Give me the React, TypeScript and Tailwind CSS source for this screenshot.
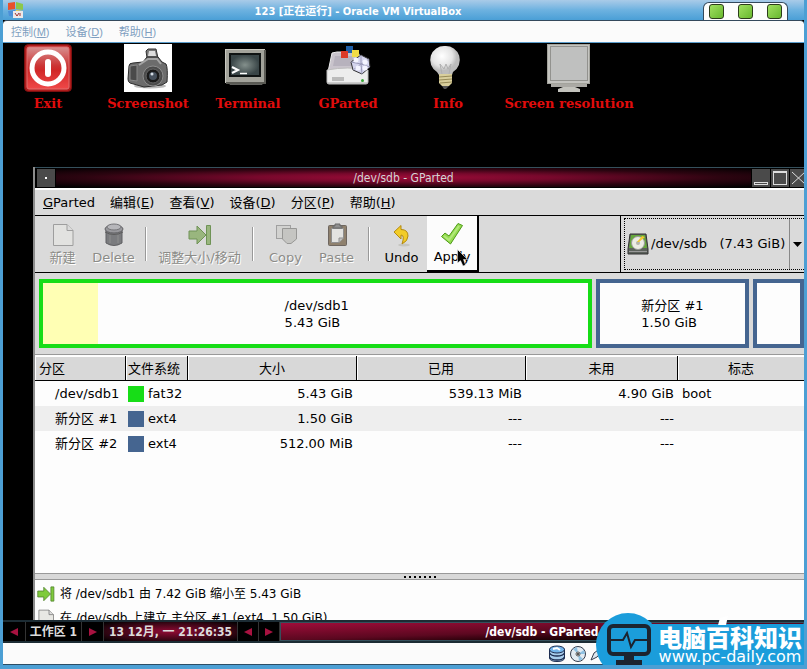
import { useState } from "react";
import type { ReactNode } from "react";

interface Partition {
  name: string;
  fs: string;
  color: string;
  size: string;
  used: string;
  unused: string;
  flags: string;
}

const partitions: Partition[] = [
  { name: "/dev/sdb1", fs: "fat32", color: "bg-[#17dd17]", size: "5.43 GiB", used: "539.13 MiB", unused: "4.90 GiB", flags: "boot" },
  { name: "新分区 #1", fs: "ext4", color: "bg-[#456590]", size: "1.50 GiB", used: "---", unused: "---", flags: "" },
  { name: "新分区 #2", fs: "ext4", color: "bg-[#456590]", size: "512.00 MiB", used: "---", unused: "---", flags: "" },
];

/* ---------- desktop icons ---------- */

function ExitIcon() {
  return (
    <svg width="48" height="48" viewBox="0 0 48 48">
      <defs>
        <linearGradient id="exit" x1="0" y1="0" x2="0" y2="1">
          <stop offset="0" stopColor="#d89090" />
          <stop offset="0.45" stopColor="#cc3434" />
          <stop offset="0.55" stopColor="#d02828" />
          <stop offset="1" stopColor="#f04848" />
        </linearGradient>
      </defs>
      <rect x="0.5" y="0.5" width="47" height="47" rx="4" fill="#b01c1c" stroke="#7c1010" />
      <rect x="3" y="3" width="42" height="42" rx="2" fill="url(#exit)" stroke="#e07070" />
      <circle cx="24" cy="24" r="16" fill="none" stroke="#fff" strokeWidth="5" />
      <rect x="21" y="15" width="6" height="18" rx="3" fill="#fff" />
    </svg>
  );
}

function CameraIcon() {
  return (
    <svg width="48" height="48" viewBox="0 0 48 48">
      <rect width="48" height="48" fill="#fff" />
      <ellipse cx="26" cy="42" rx="16" ry="2.500" fill="#bbb" />
      <path d="M23 14 22 7 24 5H32L34 14Z" fill="#777" stroke="#333" />
      <path d="M25 7H31L32 12H24Z" fill="#ddd" />
      <path d="M5 22Q5 19 9 19L19 18 23 13H34L38 18 42 20Q44 24 43 38L38 41 20 43 6 39Q4 38 4 35Z" fill="#6c6c6c" stroke="#2c2c2c" />
      <path d="M6 22 13 21V37L6 36Z" fill="#4a4a4a" stroke="#888" />
      <path d="M15 21 24 15H33L37 20" fill="none" stroke="#a5a5a5" strokeWidth="2" />
      <circle cx="29" cy="32" r="10" fill="#4b4b4b" stroke="#8c8c8c" strokeWidth="1" />
      <circle cx="29" cy="32" r="7" fill="#1b1b1b" stroke="#666" />
      <circle cx="29" cy="32" r="4" fill="#46505c" />
      <circle cx="28" cy="30" r="1.500" fill="#d4dce4" />
    </svg>
  );
}

function TerminalIcon() {
  return (
    <svg width="48" height="48" viewBox="0 0 48 48">
      <defs>
        <radialGradient id="crt">
          <stop offset="0" stopColor="#84908c" />
          <stop offset="1" stopColor="#3a4648" />
        </radialGradient>
      </defs>
      <path d="M4 38H40L38 41H6Z" fill="#63635f" />
      <rect x="1.500" y="5.500" width="39" height="33" fill="#a3a39b" stroke="#c8c8c0" />
      <path d="M41 6V39H2" fill="none" stroke="#5a5a54" strokeWidth="2" />
      <rect x="5" y="9" width="32" height="24" fill="#101414" />
      <rect x="7" y="11" width="28" height="20" fill="url(#crt)" />
      <path d="M8 23 14 26 8 29" fill="none" stroke="#fff" strokeWidth="2" />
      <path d="M16 29.500H23" stroke="#fff" strokeWidth="1.500" />
    </svg>
  );
}

function GPartedIcon() {
  return (
    <svg width="48" height="48" viewBox="0 0 48 48">
      <path d="M8 9 13 8H34L42 28H4Z" fill="#c9c4cc" stroke="#eee" />
      <path d="M11 12H28L31 22H9Z" fill="#b7b2bd" />
      <path d="M3 26Q24 22 44 26V38Q44 40 42 40H5Q3 40 3 38Z" fill="#ededed" stroke="#bdbdbd" />
      <path d="M8 33H20V37H8Z" fill="#bbb" />
      <path d="M4 39H43" stroke="#aaa" />
      <circle cx="38.500" cy="36.500" r="1.500" fill="#35a635" />
      <rect x="22" y="2" width="7" height="7" fill="#1e5fa8" />
      <rect x="17" y="7" width="7" height="7" fill="#dc3a28" />
      <rect x="28" y="6" width="7" height="7" fill="#f2dc46" />
      <path d="M37 11 45 15 46 23 38 30 29 26 27 18Z" fill="#d4d4ee" stroke="#333" />
      <path d="M37 11V20L45 15M37 20 27 18M37 20 38 30M37 20 46 23M37 20 29 26" fill="none" stroke="#9a9ab8" />
      <circle cx="32" cy="16" r="2.500" fill="#f4f4ff" />
      <circle cx="41" cy="18" r="2.500" fill="#f4f4ff" />
      <circle cx="34" cy="24" r="2.500" fill="#f4f4ff" />
      <circle cx="41" cy="24" r="2.500" fill="#f4f4ff" />
    </svg>
  );
}

function BulbIcon() {
  return (
    <svg width="48" height="48" viewBox="0 0 48 48">
      <defs>
        <radialGradient id="bulb" cx="0.4" cy="0.35">
          <stop offset="0" stopColor="#fff" />
          <stop offset="0.7" stopColor="#e4e4e4" />
          <stop offset="1" stopColor="#bcbcbc" />
        </radialGradient>
      </defs>
      <path d="M21 2A14 14 0 0 1 29 28L28 31H15L13 28A14 14 0 0 1 21 2Z" fill="url(#bulb)" />
      <path d="M18 30 16 20 20 25 22 20 24 25 27 20 25 30" fill="none" stroke="#b0b0b0" />
      <path d="M15 30H28V39L25 42H18L15 39Z" fill="#d9cf9c" />
      <path d="M15 33 28 32M15 36 28 35M16 39 28 38" stroke="#978b58" />
      <path d="M18 42H25L22 45H20Z" fill="#555" />
    </svg>
  );
}

function MonitorIcon() {
  return (
    <svg width="48" height="48" viewBox="0 0 48 48">
      <rect x="2.500" y="0.500" width="42" height="39" fill="#c4c4c0" stroke="#a3a39c" />
      <rect x="5.500" y="2.500" width="37" height="34" fill="#bfc0bf" stroke="#92928e" />
      <path d="M6 40H42V43H6Z" fill="#aaa9a4" />
      <path d="M18 43H30L35 45V48H13V45Z" fill="#c3c3bd" />
    </svg>
  );
}

/* ---------- toolbar icons ---------- */

function NewIcon({ className = "" }: { className?: string }) {
  return (
    <svg width="24" height="24" viewBox="0 0 24 24" className={className}>
      <path d="M2.500 1.500H16L22 7.500V22.500H2.500Z" fill="#e8e8e4" stroke="#777" />
      <path d="M16 1.500V7.500H22" fill="#ddd" stroke="#777" />
    </svg>
  );
}

function TrashIcon() {
  return (
    <svg width="24" height="24" viewBox="0 0 24 24" className="opacity-75">
      <path d="M4 5H20V20Q12 25 4 20Z" fill="#5b5c60" stroke="#36373a" />
      <path d="M8 12V20M16 12V20" stroke="#777" />
      <ellipse cx="12" cy="6" rx="9" ry="4" fill="#828288" stroke="#3c3c40" />
      <ellipse cx="12" cy="4" rx="7" ry="3" fill="#aaaab0" stroke="#55555a" />
      <path d="M3 9Q12 14 21 9" fill="none" stroke="#333" />
    </svg>
  );
}

function ResizeIcon({ small = false }: { small?: boolean }) {
  return (
    <svg width={small ? 18 : 24} height={small ? 18 : 24} viewBox="0 0 24 24" className={small ? "" : "opacity-75"}>
      <path d="M1 8H9V3L18 12 9 21V16H1Z" fill={small ? "#7fcb3c" : "#84aa60"} stroke="#4c7c2a" />
      <path d="M18.500 2.500H22.500V21.500H18.500Z" fill={small ? "#7fcb3c" : "#84aa60"} stroke="#4c7c2a" />
    </svg>
  );
}

function CopyIcon() {
  return (
    <svg width="24" height="24" viewBox="0 0 24 24" className="opacity-70">
      <rect x="2.500" y="2.500" width="14" height="13" fill="#d0d0cc" stroke="#888" />
      <path d="M8.500 5.500H22.500V16L17 20.500H13L8.500 16Z" fill="#bdbdb9" stroke="#7c7c78" />
    </svg>
  );
}

function PasteIcon() {
  return (
    <svg width="24" height="24" viewBox="0 0 24 24" className="opacity-75">
      <rect x="3.500" y="2.500" width="18" height="20" rx="1" fill="#77644b" stroke="#4a4036" />
      <path d="M6.500 5.500H18.500V15L14 19.500H6.500Z" fill="#e6e6e4" stroke="#777" />
      <path d="M14 19V15H18" fill="#bbb" stroke="#777" />
      <path d="M8 5V3H10V1H15V3H17V5Z" fill="#777" stroke="#444" />
    </svg>
  );
}

function UndoIcon() {
  return (
    <svg width="24" height="24" viewBox="0 0 24 24">
      <ellipse cx="14" cy="22" rx="6" ry="1.500" fill="#c5c5c0" />
      <path d="M4 9 11 2.500V6.500Q18 6.500 18 13 18 18 12 21 15 12 11 12V16Z" fill="#f2cc28" stroke="#b48a10" />
    </svg>
  );
}

function ApplyIcon() {
  return (
    <svg width="24" height="24" viewBox="0 0 24 24">
      <path d="M1.500 14.500 5 11 9 14 18 1.500 22.500 3.500 10.500 22Z" fill="#95dc50" stroke="#4e9a18" />
      <path d="M4 14 9 18 19 4" fill="none" stroke="#b2e87a" strokeWidth="2" />
    </svg>
  );
}

function DiskIcon() {
  return (
    <svg width="22" height="22" viewBox="0 0 22 22">
      <path d="M3 1H19L21 16V21H1V16Z" fill="#5c625c" stroke="#333" />
      <path d="M4 2H18L20 15H2Z" fill="#66a83c" />
      <circle cx="11" cy="10" r="6.500" fill="#ecece4" stroke="#999" />
      <circle cx="11" cy="10" r="2" fill="#b5b5ad" />
      <path d="M10 9 15 3 18 4 12 9Z" fill="#f1c832" />
      <path d="M2 18.500H20" stroke="#999" />
    </svg>
  );
}

function StackIcon() {
  return (
    <svg width="18" height="18" viewBox="0 0 18 18">
      <path d="M1.500 4V13Q2 16.500 9 16.500T16.500 13V4Z" fill="#a8cdec" stroke="#1d2d50" />
      <path d="M1.500 8Q3 11 9 11T16.500 8M1.500 12Q3 15 9 15T16.500 12" fill="none" stroke="#1d2d50" strokeWidth="1.500" />
      <ellipse cx="9" cy="4.500" rx="7.500" ry="3.500" fill="#74b6ec" stroke="#1d2d50" />
      <path d="M5 4 9 3 12 5" fill="none" stroke="#fff" strokeWidth="2" />
    </svg>
  );
}

function DiscIcon() {
  return (
    <svg width="18" height="18" viewBox="0 0 18 18">
      <circle cx="9" cy="9" r="7.500" fill="#e3ebf2" stroke="#333c4c" />
      <path d="M9 9 4 4 8 2ZM9 9 14 14 10 16ZM9 9 15 5 16 9Z" fill="#8fc1e2" />
      <circle cx="9" cy="9" r="2" fill="#fff" stroke="#555" />
      <circle cx="9" cy="9" r="1" fill="#222" />
    </svg>
  );
}

function Arrow({ left = false }: { left?: boolean }) {
  return (
    <svg width="8" height="8" viewBox="0 0 8 8" fill="#a81240">
      {left ? <path d="M8 0V8L0 4Z" /> : <path d="M0 0 8 4 0 8Z" />}
    </svg>
  );
}

/* ---------- host window ---------- */

function HostTitleBar() {
  return (
    <header className="flex h-5 items-end bg-linear-to-b from-[#a9cbe8] via-[#6db2e0] to-[#4a9fd6] pr-4 pl-1">
      <svg width="18" height="18" viewBox="0 0 18 18" className="self-center">
        <path d="M1 2 8 1V8L1 9Z" fill="#e8512c" />
        <path d="M9 1 16 3V9L9 8Z" fill="#8cc84b" />
        <path d="M1 10 8 9V16L2 15Z" fill="#4b8fd8" />
        <path d="M9 9 16 10 15 16 9 15Z" fill="#f6cf3a" />
        <path d="M6 10H16V17H6Z" fill="#ece8e8" />
        <path d="M8 12 10 15 12 12M13 12V15" stroke="#a03030" fill="none" />
      </svg>
      <h1 className="flex-1 self-center pr-3 pt-1 text-center font-['DejaVu_Sans_Condensed','DejaVu_Sans','Noto_Sans_CJK_SC',sans-serif] text-[11px] leading-4 font-bold text-white">
        123 [正在运行] - Oracle VM VirtualBox
      </h1>
      <div className="flex h-[18px] items-center justify-between gap-3.5 rounded-t-md border border-b-0 border-[#34495c] bg-[#fdfdfd] px-[5px]">
        {["最小化", "最大化", "关闭"].map((label) => (
          <button
            key={label}
            aria-label={label}
            className="size-[15px] rounded-[3px] border border-[#2c3c1c] bg-linear-to-br from-[#a0e060] to-[#68b82c]"
          />
        ))}
      </div>
    </header>
  );
}

function HostMenu() {
  const items = [["控制", "M"], ["设备", "D"], ["帮助", "H"]];
  return (
    <nav className="flex h-[23px] items-center gap-4 rounded-t-sm border-t border-b border-t-[#34495c] border-b-[#5b9dcb] bg-[#fbfbfb] pl-2 font-['Liberation_Sans','Noto_Sans_CJK_SC',sans-serif] text-[11px] leading-4 text-[#7f9fc0]">
      {items.map(([label, key]) => (
        <button key={key}>
          {label}(<u>{key}</u>)
        </button>
      ))}
    </nav>
  );
}

function Launcher({ label, icon, wide = false }: { label: string; icon: ReactNode; wide?: boolean }) {
  return (
    <button className={`flex flex-col items-center gap-1 ${wide ? "w-[126px]" : "w-[84px]"}`}>
      {icon}
      <span className="font-['DejaVu_Serif',serif] text-[13px] leading-4 font-bold whitespace-nowrap text-[#e00c0c]">
        {label}
      </span>
    </button>
  );
}

/* ---------- GParted ---------- */

function TitleBar() {
  return (
    <div className="flex h-[21px] items-center gap-px border-t border-b border-t-[#35505c] border-b-black bg-black pl-0.5">
      <button aria-label="menu" className="flex size-[18px] items-center justify-center bg-[#4a4a4a]">
        <span className="size-0.5 bg-white" />
      </button>
      <h2 className="flex h-full flex-1 items-center justify-center bg-[radial-gradient(ellipse_at_center,#9c0c38_0%,#78082c_30%,#2c0410_65%,#000_100%)] font-['DejaVu_Sans_Condensed','DejaVu_Sans',sans-serif] text-xs leading-4 text-[#d4d4d4]">
        /dev/sdb - GParted
      </h2>
      <button aria-label="minimize" className="flex h-[18px] w-[18px] items-end justify-center bg-[#4a4a4a] pb-0.5">
        <span className="h-[3px] w-3.5 border border-[#ddd]" />
      </button>
      <button aria-label="maximize" className="flex h-[18px] w-[18px] items-center justify-center bg-[#4a4a4a]">
        <span className="size-3.5 border border-t-2 border-[#ddd]" />
      </button>
      <button aria-label="close" className="h-[18px] w-3.5 overflow-hidden bg-[#4a4a4a]">
        <svg width="18" height="18" viewBox="0 0 18 18" stroke="#ddd">
          <path d="M2 3 15 15M15 3 2 15" />
        </svg>
      </button>
    </div>
  );
}

function MenuBar() {
  const items = [["编辑", "E"], ["查看", "V"], ["设备", "D"], ["分区", "P"], ["帮助", "H"]];
  return (
    <nav className="flex h-[27px] items-center gap-[15px] border-t-2 border-t-white bg-[#dadada] pl-2">
      <button><u>G</u>Parted</button>
      {items.map(([label, key]) => (
        <button key={key}>
          {label}(<u>{key}</u>)
        </button>
      ))}
    </nav>
  );
}

function ToolButton({ label, icon, width = "w-[51px]", disabled = false }: any) {
  return (
    <button
      disabled={disabled}
      className={`flex h-[54px] flex-col items-center gap-0.5 pt-1.5 whitespace-nowrap text-black disabled:text-[#8c8c88] disabled:[text-shadow:1px_1px_0_#fff] ${width}`}
    >
      {icon}
      {label}
    </button>
  );
}

function Separator() {
  return (
    <div className="flex w-3.5 justify-center">
      <span className="h-[34px] w-0.5 border-r border-l border-r-white border-l-[#999]" />
    </div>
  );
}

function Toolbar() {
  const [device, setDevice] = useState("sdb");

  return (
    <div className="flex h-[58px] items-center border-t border-b border-black bg-[#dadada] pl-0.5">
      <ToolButton label="新建" icon={<NewIcon className="opacity-60" />} disabled />
      <ToolButton label="Delete" icon={<TrashIcon />} disabled />
      <Separator />
      <ToolButton label="调整大小/移动" icon={<ResizeIcon />} width="w-[93px]" disabled />
      <Separator />
      <ToolButton label="Copy" icon={<CopyIcon />} disabled />
      <ToolButton label="Paste" icon={<PasteIcon />} disabled />
      <Separator />
      <ToolButton label="Undo" icon={<UndoIcon />} />
      <div className="relative border-r-2 border-b-2 border-black bg-[#fcfcfc]">
        <ToolButton label="Apply" icon={<ApplyIcon />} width="w-[50px]" />
        <svg width="12" height="18" viewBox="0 0 12 18" className="absolute top-[33px] left-[30px]">
          <path d="M0.500 0.500V14L3.500 11.500 6 17 8.500 16 6.500 10.500H10.500Z" fill="#000" stroke="#fff" strokeWidth="0.500" />
        </svg>
      </div>
      <div className="ml-auto flex h-full items-center border-l border-black pl-[3px]">
        <label className="flex h-[52px] items-center border border-r-0 border-dotted border-black pl-0.5">
          <DiskIcon />
          <select
            aria-label="device"
            value={device}
            onChange={(e) => setDevice(e.target.value)}
            className="w-[140px] appearance-none bg-transparent pl-0.5 outline-none"
          >
            <option value="sdb">{"/dev/sdb\u00a0\u00a0\u00a0(7.43 GiB)"}</option>
          </select>
          <span className="flex h-full w-[15px] items-center justify-center border-l border-[#888]">
            <svg width="9" height="5" viewBox="0 0 9 5">
              <path d="M0 0H9L4.500 5Z" />
            </svg>
          </span>
        </label>
      </div>
    </div>
  );
}

function DiskMap() {
  return (
    <div className="flex h-[81px] gap-1 bg-[#dadada] py-1.5 pl-1">
      <div className="flex flex-[545] border-4 border-[#17dd17] bg-[#fdfdfd]">
        <div className="w-1/10 bg-[#ffffb4]" />
        <div className="flex flex-1 items-center justify-center pr-[52px] leading-[17px]">
          <p>/dev/sdb1<br />5.43 GiB</p>
        </div>
      </div>
      <div className="flex flex-[145] items-center justify-center border-4 border-[#456590] bg-[#fdfdfd] leading-[17px]">
        <p>新分区 #1<br />1.50 GiB</p>
      </div>
      <div className="flex-[43] border-4 border-[#456590] bg-[#fdfdfd]" />
    </div>
  );
}

function PartitionTable() {
  const th = "h-[25px] border-r border-b border-black bg-[#d8d8d8] pt-0.5 shadow-[inset_1px_1px_0_#fff] font-normal";
  return (
    <table className="w-full table-fixed border-separate border-spacing-0">
      <colgroup>
        <col className="w-[91px]" />
        <col className="w-[62px]" />
        <col className="w-[169px]" />
        <col className="w-[169px]" />
        <col className="w-[152px]" />
        <col />
      </colgroup>
      <thead>
        <tr>
          <th className={`${th} pl-1 text-left`}>分区</th>
          <th className={`${th} pl-0.5 text-left whitespace-nowrap`}>文件系统</th>
          <th className={th}>大小</th>
          <th className={th}>已用</th>
          <th className={th}>未用</th>
          <th className={`${th} border-r-0`}>标志</th>
        </tr>
      </thead>
      <tbody>
        {partitions.map((p) => (
          <tr key={p.name} className="h-[25px] even:bg-[#eeeeee]">
            <td className="pl-5 whitespace-nowrap">{p.name}</td>
            <td>
              <span className="flex items-center gap-1 pl-0.5">
                <span className={`size-4 ${p.color}`} />
                {p.fs}
              </span>
            </td>
            <td className="pr-1 text-right">{p.size}</td>
            <td className="pr-1 text-right">{p.used}</td>
            <td className="pr-1 text-right">{p.unused}</td>
            <td className="pl-1">{p.flags}</td>
          </tr>
        ))}
      </tbody>
    </table>
  );
}

function Operations() {
  return (
    <ul className="h-10 overflow-hidden bg-[#fdfdfd] pt-0.5 pl-0.5 text-xs">
      <li className="flex h-6 items-center gap-[5px]">
        <ResizeIcon small />
        将 /dev/sdb1 由 7.42 GiB 缩小至 5.43 GiB
      </li>
      <li className="flex h-6 items-center gap-[5px]">
        <NewIcon className="size-[18px]" />
        在 /dev/sdb 上建立 主分区 #1 (ext4, 1.50 GiB)
      </li>
    </ul>
  );
}

function GPartedWindow() {
  return (
    <section className="mt-[55px] ml-[30px] flex min-h-0 flex-1 flex-col border-l-2 border-[#8c8c8c] bg-[#dadada] font-['DejaVu_Sans','Noto_Sans_CJK_SC',sans-serif] text-[13px] leading-[18px] text-black">
      <TitleBar />
      <MenuBar />
      <Toolbar />
      <DiskMap />
      <div className="flex-1 border-t border-[#999] bg-[#fdfdfd] pt-px">
        <PartitionTable />
      </div>
      <div className="flex h-[7px] items-center justify-center gap-[3px] border-t border-b border-[#999] bg-[#d8d8d8]">
        {Array.from({ length: 7 }, (_, i) => (
          <span key={i} className="size-0.5 bg-black" />
        ))}
      </div>
      <Operations />
    </section>
  );
}

function Taskbar() {
  const cell = "flex h-full items-center justify-center border-r border-[#333]";
  return (
    <div className="flex h-[23px] border-t-2 border-b-2 border-[#1c2c34] bg-black font-['DejaVu_Sans_Condensed','DejaVu_Sans','Noto_Sans_CJK_SC',sans-serif] text-xs leading-4 font-bold text-[#dcdcdc]">
      <button aria-label="previous workspace" className={`${cell} w-[23px]`}><Arrow left /></button>
      <div className={`${cell} w-14`}>工作区 1</div>
      <button aria-label="next workspace" className={`${cell} w-[22px]`}><Arrow /></button>
      <div className={`${cell} w-[134px] bg-[radial-gradient(ellipse_at_center,#900a34_0%,#3c0616_60%,#000_100%)] whitespace-nowrap`}>
        13 12月, 一 21:26:35
      </div>
      <button aria-label="previous window" className={`${cell} w-[21px]`}><Arrow left /></button>
      <button aria-label="next window" className={`${cell} w-[21px]`}><Arrow /></button>
      <button className="flex-1 border border-[#35505c] bg-linear-to-br from-[#a00c3a] via-[#5c0820] to-black text-white">
        /dev/sdb - GParted
      </button>
    </div>
  );
}

function Watermark() {
  return (
    <div className="absolute right-0 bottom-0 flex items-end">
      <svg width="64" height="52" viewBox="0 0 64 52" className="-mr-8">
        <circle cx="32" cy="32" r="32" fill="#1b9ddb" />
      </svg>
      <div className="relative flex h-[41px] items-center bg-[#1b9ddb] pr-0.5">
        <svg width="44" height="42" viewBox="0 0 44 42" className="-ml-[21px]">
          <rect x="2" y="2" width="40" height="28" rx="4" fill="none" stroke="#1c2430" strokeWidth="4" />
          <path d="M4 16H16L20 9 24 23 28 16H40" fill="none" stroke="#1c2430" strokeWidth="2" />
          <path d="M17 31H27V36H35V41H9V36H17Z" fill="#1c2430" />
        </svg>
        <svg width="10" height="9" viewBox="0 0 10 9" className="absolute -top-2 left-[90px]">
          <path d="M2 2 10 0 8 9H0Z" fill="#fff" />
        </svg>
        <div className="pl-[7px] font-['Noto_Sans_CJK_SC',sans-serif] text-2xl leading-6 font-black text-white">
          <p>电脑百科知识</p>
          <p className="text-center font-['DejaVu_Sans',sans-serif] text-base leading-4 font-normal">www.pc-daily.com</p>
        </div>
      </div>
    </div>
  );
}

export default function App() {
  return (
    <div className="relative flex h-screen flex-col overflow-hidden border-r-[3px] border-b-4 border-l-[3px] border-[#4c9fd4] bg-black">
      <HostTitleBar />
      <HostMenu />
      <main className="flex min-h-0 flex-1 flex-col">
        <div className="flex gap-4 pt-px pl-[3px]">
          <Launcher label="Exit" icon={<ExitIcon />} />
          <Launcher label="Screenshot" icon={<CameraIcon />} />
          <Launcher label="Terminal" icon={<TerminalIcon />} />
          <Launcher label="GParted" icon={<GPartedIcon />} />
          <Launcher label="Info" icon={<BulbIcon />} />
          <Launcher label="Screen resolution" icon={<MonitorIcon />} wide />
        </div>
        <GPartedWindow />
      </main>
      <Taskbar />
      <footer className="flex h-[22px] items-center gap-[3px] border-b border-[#2c4c64] bg-[#fbfbfb] pl-[545px]">
        <StackIcon />
        <DiscIcon />
        <svg width="14" height="14" viewBox="0 0 14 14">
          <path d="M1 13 4 6 11 1 13 3 7 10Z" fill="#dde6ee" stroke="#333c4c" />
        </svg>
      </footer>
      <Watermark />
    </div>
  );
}
